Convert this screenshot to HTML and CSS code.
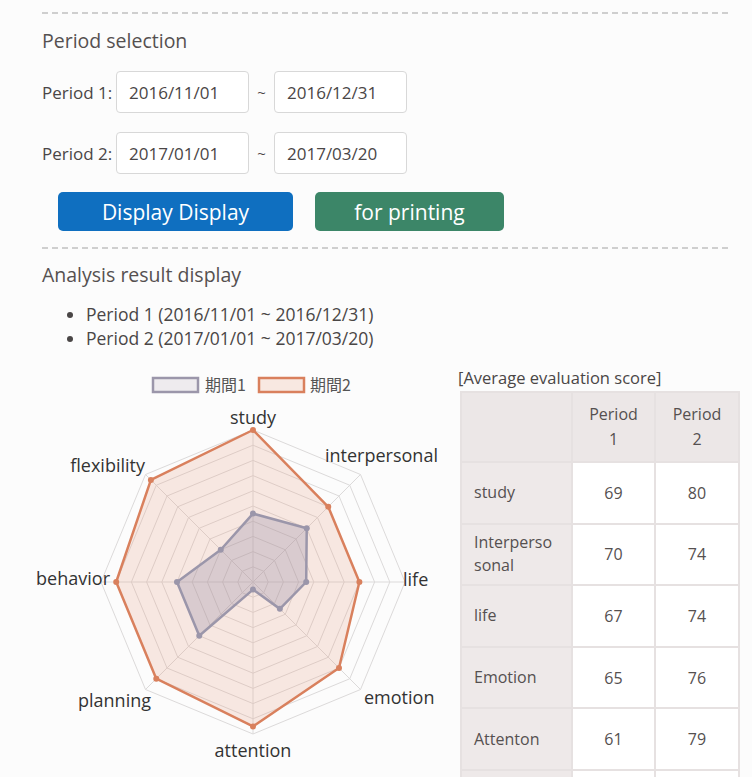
FILE: index.html
```html
<!DOCTYPE html>
<html lang="en">
<head>
<meta charset="utf-8">
<title>Analysis</title>
<link rel="stylesheet" href="styles.css">
</head>
<body>
<div class="page">
  <div class="divider"></div>

  <h2 class="section-title title-period">Period selection</h2>

  <div class="period-row row-first">
    <span class="period-label">Period 1:</span>
    <div class="date-box">2016/11/01</div>
    <span class="tilde">~</span>
    <div class="date-box">2016/12/31</div>
  </div>
  <div class="period-row">
    <span class="period-label">Period 2:</span>
    <div class="date-box">2017/01/01</div>
    <span class="tilde">~</span>
    <div class="date-box">2017/03/20</div>
  </div>

  <div class="actions">
    <button class="btn btn-display">Display Display</button>
    <button class="btn btn-print">for printing</button>
  </div>

  <div class="divider divider-second"></div>

  <h2 class="section-title title-result">Analysis result display</h2>

  <ul class="period-list">
    <li>Period 1 (2016/11/01 ~ 2016/12/31)</li>
    <li>Period 2 (2017/01/01 ~ 2017/03/20)</li>
  </ul>

  <div class="results">
    <svg class="radar" width="456" height="412" viewBox="0 0 456 412">
      <defs>
        <polygon id="ring" points="0,-15.2 10.75,-10.75 15.2,0 10.75,10.75 0,15.2 -10.75,10.75 -15.2,0 -10.75,-10.75" />
      </defs>

      <!-- legend -->
      <rect class="legend-p1" x="153" y="13" width="45" height="14" />
      <text class="legend-text" x="205" y="26">期間1</text>
      <rect class="legend-p2" x="259" y="13" width="45" height="14" />
      <text class="legend-text" x="310" y="26">期間2</text>

      <g transform="translate(253,217)">
        <!-- grid rings, every 2 points from 60 to 80 -->
        <g class="grid">
          <use href="#ring" transform="scale(1)" />
          <use href="#ring" transform="scale(2)" />
          <use href="#ring" transform="scale(3)" />
          <use href="#ring" transform="scale(4)" />
          <use href="#ring" transform="scale(5)" />
          <use href="#ring" transform="scale(6)" />
          <use href="#ring" transform="scale(7)" />
          <use href="#ring" transform="scale(8)" />
          <use href="#ring" transform="scale(9)" />
          <use href="#ring" transform="scale(10)" />
        </g>
        <!-- spokes -->
        <g class="spokes">
          <line x1="0" y1="0" x2="0" y2="-152" />
          <line x1="0" y1="0" x2="107.48" y2="-107.48" />
          <line x1="0" y1="0" x2="152" y2="0" />
          <line x1="0" y1="0" x2="107.48" y2="107.48" />
          <line x1="0" y1="0" x2="0" y2="152" />
          <line x1="0" y1="0" x2="-107.48" y2="107.48" />
          <line x1="0" y1="0" x2="-152" y2="0" />
          <line x1="0" y1="0" x2="-107.48" y2="-107.48" />
        </g>

        <!-- period 2 -->
        <polygon class="area-p2" points="0,-152 75.24,-75.24 106.4,0 85.98,85.98 0,144.4 -96.73,96.73 -136.8,0 -102.1,-102.1" />
        <g class="dots-p2">
          <circle cx="0" cy="-152" r="3" />
          <circle cx="75.24" cy="-75.24" r="3" />
          <circle cx="106.4" cy="0" r="3" />
          <circle cx="85.98" cy="85.98" r="3" />
          <circle cx="0" cy="144.4" r="3" />
          <circle cx="-96.73" cy="96.73" r="3" />
          <circle cx="-136.8" cy="0" r="3" />
          <circle cx="-102.1" cy="-102.1" r="3" />
        </g>

        <!-- period 1 -->
        <polygon class="area-p1" points="0,-68.4 53.74,-53.74 53.2,0 26.87,26.87 0,7.6 -53.74,53.74 -76,0 -32.24,-32.24" />
        <g class="dots-p1">
          <circle cx="0" cy="-68.4" r="3" />
          <circle cx="53.74" cy="-53.74" r="3" />
          <circle cx="53.2" cy="0" r="3" />
          <circle cx="26.87" cy="26.87" r="3" />
          <circle cx="0" cy="7.6" r="3" />
          <circle cx="-53.74" cy="53.74" r="3" />
          <circle cx="-76" cy="0" r="3" />
          <circle cx="-32.24" cy="-32.24" r="3" />
        </g>
      </g>

      <!-- axis labels -->
      <g class="axis-label">
        <text x="253" y="59" text-anchor="middle">study</text>
        <text x="325" y="97">interpersonal</text>
        <text x="403" y="221">life</text>
        <text x="364" y="339">emotion</text>
        <text x="253" y="392" text-anchor="middle">attention</text>
        <text x="151" y="342" text-anchor="end">planning</text>
        <text x="110" y="220" text-anchor="end">behavior</text>
        <text x="145" y="107" text-anchor="end">flexibility</text>
      </g>
    </svg>

    <div class="score-panel">
      <div class="score-caption">[Average evaluation score]</div>
      <table class="score-table">
        <colgroup>
          <col class="col-name">
          <col class="col-val">
          <col class="col-val2">
        </colgroup>
        <thead>
          <tr>
            <th></th>
            <th>Period<br>1</th>
            <th>Period<br>2</th>
          </tr>
        </thead>
        <tbody>
          <tr><th>study</th><td>69</td><td>80</td></tr>
          <tr><th>Interperso<br>sonal</th><td>70</td><td>74</td></tr>
          <tr><th>life</th><td>67</td><td>74</td></tr>
          <tr><th>Emotion</th><td>65</td><td>76</td></tr>
          <tr><th>Attenton</th><td>61</td><td>79</td></tr>
          <tr class="row-tail"><th></th><td></td><td></td></tr>
        </tbody>
      </table>
    </div>
  </div>
</div>
</body>
</html>
```

FILE: styles.css
```css
html, body {
  margin: 0;
  padding: 0;
  background: #fcfcfc;
}

body {
  font-family: "Open Sans", "Noto Sans CJK JP", sans-serif;
  color: #4a4646;
  overflow: hidden;
}

.page {
  padding: 0 14px 0 42px;
}

.divider {
  width: 686px;
  margin-top: 12px;
  border-top: 2px dashed #cfcfcf;
}

.divider-second {
  margin-top: 16px;
}

.section-title {
  margin: 0;
  font-size: 19.5px;
  font-weight: normal;
  line-height: 24px;
  color: #555050;
}

.title-period {
  margin-top: 15px;
}

.title-result {
  margin-top: 14px;
}

/* date range rows */
.period-row {
  display: flex;
  align-items: center;
  margin-top: 19px;
  font-size: 17px;
}

.row-first {
  margin-top: 18px;
}

.period-label {
  width: 74px;
  color: #4a4646;
}

.date-box {
  box-sizing: border-box;
  width: 133px;
  height: 42px;
  padding-left: 12px;
  display: flex;
  align-items: center;
  border: 1px solid #d8d8d8;
  border-radius: 4px;
  background: #fff;
  color: #4a4646;
}

.tilde {
  width: 25px;
  text-align: center;
  font-size: 15px;
}

/* action buttons */
.actions {
  display: flex;
  gap: 22px;
  margin-top: 18px;
  padding-left: 16px;
}

.btn {
  height: 39px;
  border: none;
  border-radius: 5px;
  color: #fff;
  font-family: "Open Sans", sans-serif;
  font-size: 21px;
  padding: 0;
}

.btn-display {
  width: 235px;
  background: #0f6fc0;
}

.btn-print {
  width: 189px;
  background: #3c8668;
}

/* period summary list */
.period-list {
  margin: 15px 0 0;
  padding-left: 44px;
  font-size: 17.5px;
  line-height: 24px;
  color: #4a4646;
}

/* chart + table */
.results {
  display: flex;
  align-items: flex-start;
  margin-top: 15px;
  margin-left: -42px;
}

.radar {
  display: block;
  flex: none;
}

.grid use {
  fill: none;
  stroke: #dcdada;
  stroke-width: 1;
}

#ring {
  vector-effect: non-scaling-stroke;
}

.spokes line {
  stroke: #dcdada;
  stroke-width: 1;
}

.area-p2 {
  fill: rgba(228, 150, 118, 0.2);
  stroke: #d9805d;
  stroke-width: 2.5;
  stroke-linejoin: round;
}

.dots-p2 circle {
  fill: #d9805d;
}

.area-p1 {
  fill: rgba(140, 132, 160, 0.28);
  stroke: #9b96aa;
  stroke-width: 2.5;
  stroke-linejoin: round;
}

.dots-p1 circle {
  fill: #9b96aa;
}

.legend-p1 {
  fill: #eeebee;
  stroke: #9b96aa;
  stroke-width: 2.5;
}

.legend-p2 {
  fill: #f8e8e1;
  stroke: #d9805d;
  stroke-width: 2.5;
}

.legend-text {
  font-family: "Noto Sans CJK JP", sans-serif;
  font-size: 16px;
  fill: #555;
}

.axis-label text {
  font-family: "Open Sans", sans-serif;
  font-size: 18px;
  fill: #333;
}

.score-panel {
  margin-left: 2px;
  padding-top: 2px;
}

.score-caption {
  font-size: 16.5px;
  line-height: 22px;
  color: #4a4646;
}

.score-table {
  margin: 2px 0 0 2px;
  width: 278px;
  border-collapse: collapse;
  table-layout: fixed;
  font-size: 16px;
  color: #555050;
}

.col-name { width: 111px; }
.col-val { width: 83px; }
.col-val2 { width: 84px; }

.score-table th,
.score-table td {
  border: 2px solid #e6e1e1;
  font-weight: normal;
}

.score-table thead th {
  height: 68px;
  background: #ece7e7;
  text-align: center;
  line-height: 25px;
  padding: 0;
}

.score-table tbody th {
  height: 59.6px;
  background: #eee9e9;
  text-align: left;
  padding: 0 0 0 12px;
  line-height: 23px;
}

.score-table td {
  background: #fff;
  text-align: center;
  padding: 0;
}
```
